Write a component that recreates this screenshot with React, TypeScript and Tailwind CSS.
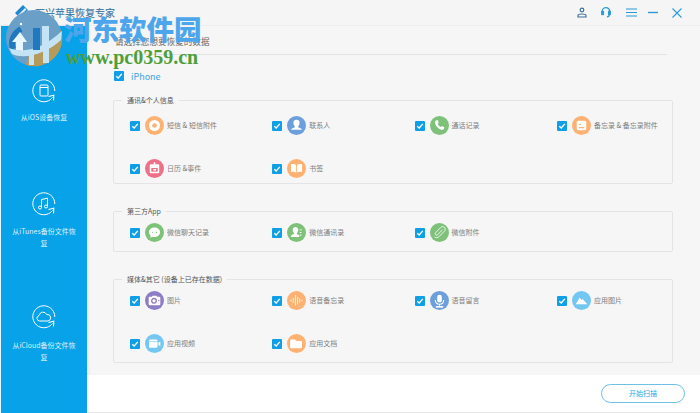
import React from "react";

const Check = () => (
  <span className="w-[10px] h-[10px] rounded-[1px] bg-[#0f9fe6] flex items-center justify-center shrink-0">
    <svg width="8" height="8" viewBox="0 0 8 8" fill="none" stroke="#fff" strokeWidth="1.3">
      <path d="M1.3 4.2 3.2 6 6.8 1.8" />
    </svg>
  </span>
);

const icons: Record<string, React.ReactNode> = {
  sms: (
    <>
      <circle cx="9" cy="9" r="5.2" fill="#fff" />
      <circle cx="9" cy="9" r="2.2" fill="#fdb274" />
    </>
  ),
  contact: (
    <path d="M9 3.6a2.9 2.9 0 0 1 2.9 3c0 1.400-.7 2.500-1.300 3.100v.9c1.400.5 3 1 3.600 2.400H3.800c.6-1.400 2.200-1.900 3.600-2.400v-.9C6.800 9.100 6.100 8 6.100 6.600a2.900 2.900 0 0 1 2.900-3Z" fill="#fff" />
  ),
  phone: (
    <path d="M5.600 4.200 7.300 3.900l1 2.500-1 .9c.5 1.300 1.500 2.400 2.900 3.100l1-1 2.300 1.200-.4 1.800c-.3.5-1 .7-1.700.6C7.700 12.300 4.800 9.200 4.800 5.600c0-.6.300-1.100.8-1.400Z" fill="#fff" />
  ),
  note: (
    <>
      <rect x="4.500" y="4.500" width="9" height="9" rx="1.500" fill="#fff" />
      <path d="M6.500 8h2M6.500 11h5" stroke="#fdb274" strokeWidth="1" />
    </>
  ),
  calendar: (
    <>
      <rect x="4.500" y="5" width="9" height="8.500" rx="1" fill="#fff" />
      <rect x="8.300" y="3" width="1.400" height="3" fill="#fff" />
      <rect x="6" y="8.500" width="6" height="3.500" fill="#ee6f86" />
      <rect x="8" y="9.500" width="2.500" height="1.500" fill="#fff" />
    </>
  ),
  book: (
    <path d="M3.800 5c2-.4 3.800-.2 4.800.6v7.400c-1-.7-2.800-1-4.800-.7V5Zm10.400 0c-2-.4-3.800-.2-4.800.6v7.400c1-.7 2.800-1 4.800-.7V5Z" fill="#fff" />
  ),
  chat: (
    <>
      <path d="M9 4.300c3 0 5.300 2 5.300 4.500S12 13.300 9 13.300c-.6 0-1.200-.1-1.800-.2L5 14l.4-2C4.300 11.200 3.700 10 3.700 8.800 3.700 6.300 6 4.300 9 4.300Z" fill="#fff" />
      <circle cx="7.200" cy="8.800" r=".6" fill="#7ec27a" />
      <circle cx="10.800" cy="8.800" r=".6" fill="#7ec27a" />
    </>
  ),
  wxcontact: (
    <>
      <path d="M8 3.800c1.600 0 2.600 1.200 2.600 2.800 0 1.200-.6 2.200-1.200 2.800v1c1 .4 1.900.8 2.300 1.800v1H3.700v-1c.5-1 1.700-1.400 2.900-1.800v-1C6 8.800 5.400 7.800 5.400 6.600 5.400 5 6.400 3.800 8 3.800Z" fill="#fff" />
      <path d="M12 6.500h1.800M12 9h1.800M12 11.500h1.800" stroke="#fff" strokeWidth=".9" />
    </>
  ),
  clip: (
    <path d="M11.800 6.400 7.300 11c-.6.600-1.500.6-2 .1s-.5-1.400.1-2l4.700-4.800c1.100-1.100 2.700-1 3.600-.1.900.9 1 2.500-.1 3.600l-4.900 5c-1.500 1.500-3.500 1.300-4.400.3" fill="none" stroke="#fff" strokeWidth=".8" />
  ),
  camera: (
    <>
      <path d="M4.500 5.500h2l.7-1h3.600l.7 1h2a1 1 0 0 1 1 1v6a1 1 0 0 1-1 1h-9a1 1 0 0 1-1-1v-6a1 1 0 0 1 1-1Z" fill="#fff" />
      <circle cx="8.500" cy="9.300" r="2.200" fill="none" stroke="#8d7dc4" strokeWidth="1.200" />
      <circle cx="13" cy="9" r=".6" fill="#8d7dc4" />
    </>
  ),
  wave: (
    <path d="M4 8v2M6 6.500v5M8 4v10M10 5.500v7M12 7v4M14 8.300v1.400" stroke="#fff" strokeWidth=".8" />
  ),
  mic: (
    <>
      <rect x="6.800" y="3.500" width="4.400" height="7.500" rx="2.200" fill="#fff" />
      <path d="M5 8.500c0 2.500 1.700 4 4 4s4-1.500 4-4M9 12.500v1.500" fill="none" stroke="#fff" strokeWidth="1" />
      <path d="M5.500 15h7" stroke="#fff" strokeWidth="1.500" />
    </>
  ),
  mountain: <path d="M3.500 12.500 7.300 6.500 9 8.500l1-1 4.500 5Z" fill="#fff" />,
  video: (
    <>
      <rect x="3.800" y="5.300" width="8" height="7.800" rx="1" fill="#fff" />
      <path d="M12.500 8.300 14.500 7v4.500l-2-1.300Z" fill="#fff" />
      <path d="M3.800 7.200h8" stroke="#74c7f0" strokeWidth=".6" />
    </>
  ),
  folder: (
    <path d="M4 5.300h3.700l1.200 1.300h4.300a1 1 0 0 1 1 1v5a1 1 0 0 1-1 1H4a1 1 0 0 1-1-1V6.300a1 1 0 0 1 1-1Z" fill="#fff" />
  ),
};

type Item = { label: string; icon: string; color: string };

const Row = ({ item }: { item: Item }) => (
  <div className="flex items-center h-[19px]">
    <Check />
    <span className="w-[19px] h-[19px] rounded-full ml-[5px] shrink-0" style={{ backgroundColor: item.color }}>
      <svg width="19" height="19" viewBox="0 0 18 18">
        {icons[item.icon]}
      </svg>
    </span>
    <span className="ml-[3px] text-[7px] leading-none text-[#808080] whitespace-nowrap">{item.label}</span>
  </div>
);

const Panel = ({ title, items, className, rowGap }: { title: string; items: Item[]; className: string; rowGap: string }) => (
  <section className={`relative border border-[#e4e4e4] rounded-[2px] w-[560px] pl-[16px] ${className}`}>
    <span className="absolute left-[8px] top-[-5px] bg-[#f6f6f6] px-[5px] text-[7px] leading-[9px] text-[#555] whitespace-nowrap">
      {title}
    </span>
    <div className={`grid grid-cols-[142.300px_142.300px_142.300px_auto] ${rowGap}`}>
      {items.map((it) => (
        <Row key={it.label} item={it} />
      ))}
    </div>
  </section>
);

const orange = "#fdb274";
const green = "#7ec27a";
const blue = "#6d9fdc";
const sky = "#74c7f0";

const contactItems: Item[] = [
  { label: "短信 & 短信附件", icon: "sms", color: orange },
  { label: "联系人", icon: "contact", color: blue },
  { label: "通话记录", icon: "phone", color: green },
  { label: "备忘录 & 备忘录附件", icon: "note", color: orange },
  { label: "日历 &事件", icon: "calendar", color: "#ee6f86" },
  { label: "书签", icon: "book", color: orange },
];

const appItems: Item[] = [
  { label: "微信聊天记录", icon: "chat", color: green },
  { label: "微信通讯录", icon: "wxcontact", color: green },
  { label: "微信附件", icon: "clip", color: green },
];

const mediaItems: Item[] = [
  { label: "图片", icon: "camera", color: "#8d7dc4" },
  { label: "语音备忘录", icon: "wave", color: orange },
  { label: "语音留言", icon: "mic", color: blue },
  { label: "应用图片", icon: "mountain", color: sky },
  { label: "应用视频", icon: "video", color: sky },
  { label: "应用文档", icon: "folder", color: orange },
];

const SideIcon = ({ children }: { children: React.ReactNode }) => (
  <svg width="24" height="24" viewBox="0 0 24 24" fill="none" stroke="#fff" strokeWidth="1">
    <path d="M20.500 18.500A11 11 0 1 1 22.800 12" />
    <path d="M16.500 17.500 21.800 16.300 21.500 21.500" strokeWidth="1.100" />
    {children}
  </svg>
);

const SideItem = ({ icon, label, labelClass }: { icon: React.ReactNode; label: string; labelClass: string }) => (
  <div className="flex flex-col items-center h-[113px]">
    <SideIcon>{icon}</SideIcon>
    <p className={`w-[64px] text-center text-[7px] leading-[12px] text-[#d8f1fd] ${labelClass}`}>{label}</p>
  </div>
);

export default function App() {
  return (
    <div
      className="relative w-[700px] h-[413px] overflow-hidden bg-[#f6f6f6] flex flex-col"
      style={{ fontFamily: '"Noto Sans CJK SC", "Noto Sans", sans-serif' }}
    >
      <header className="h-[26px] shrink-0 flex items-center bg-[#f5f5f5] border-b border-[#eeeeee]">
        <span className="ml-[35px] text-[10px] leading-none text-[#4c7fa8] font-medium">万兴苹果恢复专家</span>
        <div className="ml-auto flex items-center pr-[18px]">
          <svg width="10" height="11" viewBox="0 0 10 11" fill="none" stroke="#3f6f9c" strokeWidth="1.200">
            <circle cx="5" cy="3" r="1.800" />
            <path d="M1 10V8.500C1 7.500 2 7 5 7s4 .5 4 1.500V10Z" />
          </svg>
          <svg className="ml-[14px]" width="10" height="11" viewBox="0 0 10 11" fill="none" stroke="#2b9bd8" strokeWidth="1.300">
            <path d="M1.200 6V4.500a3.800 3.800 0 0 1 7.600 0V6" />
            <rect x=".8" y="4.500" width="1.600" height="3" fill="#2b9bd8" />
            <rect x="7.600" y="4.500" width="1.600" height="3" fill="#2b9bd8" />
            <path d="M8.400 7.500c0 1.500-1 2.300-2.500 2.300" />
          </svg>
          <svg className="ml-[15px]" width="11" height="9" viewBox="0 0 11 9" stroke="#2b9bd8" strokeWidth="1.200">
            <path d="M0 1h11M0 4.500h11M0 8h11" />
          </svg>
          <svg className="ml-[11px]" width="10" height="9" viewBox="0 0 10 9" stroke="#2b9bd8" strokeWidth="1.400">
            <path d="M0 4.500h10" />
          </svg>
          <svg className="ml-[14px]" width="10" height="10" viewBox="0 0 10 10" stroke="#2b9bd8" strokeWidth="1.100">
            <path d="m.5.500 9 9M9.500.500l-9 9" />
          </svg>
        </div>
      </header>

      <div className="flex flex-1 min-h-0">
        <aside className="w-[87px] shrink-0 border-l border-[#e8f5fc] bg-[#08a2e8] pt-[53px] shadow-[1px_0_3px_rgba(0,0,0,0.1)]">
          <SideItem
            label="从iOS设备恢复"
            labelClass="mt-[8px]"
            icon={
              <>
                <rect x="8" y="6" width="8" height="11" rx="1" />
                <path d="M8 8.500h8" />
              </>
            }
          />
          <SideItem
            label="从iTunes备份文件恢复"
            labelClass="mt-[9px]"
            icon={
              <>
                <path d="M9.500 15.500V7.500l6-1.300v8" />
                <circle cx="8" cy="15.500" r="1.500" />
                <circle cx="14" cy="14.500" r="1.500" />
              </>
            }
          />
          <SideItem
            label="从iCloud备份文件恢复"
            labelClass="mt-[10px]"
            icon={<path d="M7.500 16a2.800 2.800 0 0 1-.4-5.500 4 4 0 0 1 7.600-1 3.300 3.300 0 0 1 1.300 6.500Z" />}
          />
        </aside>

        <main className="flex-1 min-w-0 flex flex-col">
          <div className="flex-1 pl-[26px]">
            <h1 className="mt-[9px] ml-[2px] text-[8.600px] leading-[12px] font-normal text-[#666]">请选择您想要恢复的数据</h1>
            <div className="mt-[7px] w-[554px] border-b border-[#e3e3e3]" />
            <label className="mt-[15px] ml-[1px] flex items-center h-[12px]">
              <Check />
              <span className="ml-[7px] text-[9px] leading-none text-[#3aa5e0]">iPhone</span>
            </label>
            <Panel title="通讯&个人信息" items={contactItems} className="mt-[18px] h-[84px] pt-[15px]" rowGap="gap-y-[24px]" />
            <Panel title="第三方App" items={appItems} className="mt-[27px] h-[41px] pt-[11px]" rowGap="" />
            <Panel title="媒体&其它 (设备上已存在数据)" items={mediaItems} className="mt-[27px] h-[84px] pt-[11px]" rowGap="gap-y-[24px]" />
          </div>
          <footer className="h-[38px] shrink-0 bg-white border-b border-[#e8e8e8] flex items-center justify-end pr-[15px]">
            <button className="w-[84px] h-[19px] rounded-full border border-[#6fbfe6] text-[7px] leading-none text-[#2ea6e6]">
              开始扫描
            </button>
          </footer>
        </main>
      </div>

      {/* watermark over the top-left corner */}
      <div className="absolute left-0 top-0 w-[210px] h-[70px] pointer-events-none">
        <svg className="absolute left-0 top-0" width="70" height="70" viewBox="0 0 70 70">
          {/* app pennant behind the round mark */}
          <path d="M15 13 23 5l5 5-8 8Z" fill="#1f86cf" />
          <path d="M18 15 25 8l1.500 1.500-7 7Z" fill="#d8eefa" />
          <circle cx="34" cy="38" r="28" fill="#6aa0c8" />
          {/* tan lower rim */}
          <path d="M26 65A28 28 0 0 0 61 30L52 44 30 50Z" fill="#b59a5c" />
          {/* dark blue arc at the left */}
          <path d="M13 49c-3-8 1-16 8-20" fill="none" stroke="#1f78c0" strokeWidth="6" />
          {/* pale swoosh with the H legs */}
          <path d="M9 48c14 6 34 1 53-17l-1 9C47 53 25 60 12 54Z" fill="#c4e4f5" />
          <rect x="29" y="50" width="5" height="15" fill="#c4e4f5" />
          <rect x="43" y="48" width="6" height="15" fill="#c4e4f5" />
          <path d="M33 28h7v22h-7Z" fill="#1f78c0" />
          <path d="M42 26h7v22h-7Z" fill="#c4e4f5" />
          {/* white arrow */}
          <path d="M20 32 12 42h4v8l7 1v-9h4Z" fill="#e8f6fd" />
          <circle cx="21" cy="24" r="1.200" fill="#fff" />
        </svg>
        <span
          className="absolute left-[64px] top-[9px] text-[27.500px] leading-[38px] font-black text-[#4da6ec] whitespace-nowrap"
          style={{ fontFamily: '"Noto Sans CJK SC", serif' }}
        >
          河东软件园
        </span>
        <span
          className="absolute left-[66px] top-[47px] text-[20px] leading-[20px] font-bold text-[#4e9e3a] whitespace-nowrap"
          style={{ fontFamily: '"Liberation Serif", serif' }}
        >
          www.pc0359.cn
        </span>
      </div>
    </div>
  );
}
